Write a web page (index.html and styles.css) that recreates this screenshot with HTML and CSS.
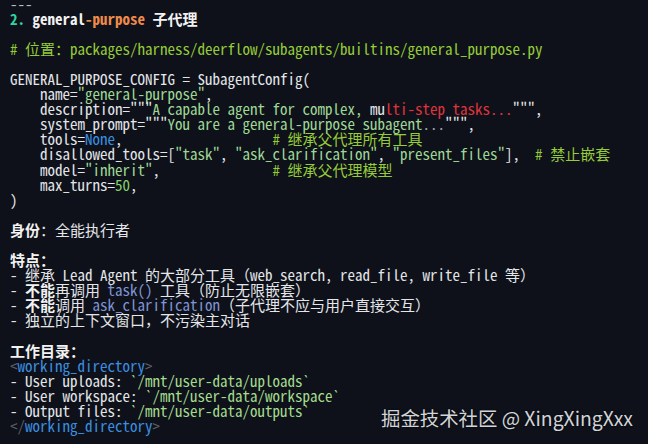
FILE: index.html
```html
<!DOCTYPE html>
<html lang="zh">
<head>
<meta charset="utf-8">
<title>general-purpose 子代理</title>
<link rel="stylesheet" href="styles.css">
</head>
<body>
<main class="doc">
<div class="ln dim">---</div>
<div class="ln"><b class="teal">2.</b> <b>general</b><b class="orange">-purpose</b> <b class="z">子代理</b></div>
<div class="ln"></div>
<div class="ln cm"># <span class="z">位置：</span>packages/harness/deerflow/subagents/builtins/general_purpose.py</div>
<div class="ln"></div>
<div class="ln">GENERAL_PURPOSE_CONFIG = SubagentConfig(</div>
<div class="ln">    name=<span class="str">"general-purpose"</span>,</div>
<div class="ln">    description="""<span class="str">A capable agent for complex, </span>mu<span class="red">lti-step tasks...</span>""",</div>
<div class="ln">    system_prompt="""<span class="str">You are a general-purpose subagent</span><span class="dots">...</span>""",</div>
<div class="ln">    tools=<span class="kw">None</span>,                    <span class="cm"># <span class="z">继承父代理所有工具</span></span></div>
<div class="ln">    disallowed_tools=[<span class="str">"task"</span>, <span class="str">"ask_clarification"</span>, <span class="str">"present_files"</span>],  <span class="cm"># <span class="z">禁止嵌套</span></span></div>
<div class="ln">    model=<span class="str">"inherit"</span>,               <span class="cm"># <span class="z">继承父代理模型</span></span></div>
<div class="ln">    max_turns=<span class="num">50</span>,</div>
<div class="ln">)</div>
<div class="ln"></div>
<div class="ln"><b class="z">身份</b><span class="z">：全能执行者</span></div>
<div class="ln"></div>
<div class="ln"><b class="z">特点：</b></div>
<div class="ln">- <span class="z">继承</span> Lead Agent <span class="z">的大部分工具（</span>web_search, read_file, write_file <span class="z">等）</span></div>
<div class="ln">- <b class="z">不能</b><span class="z">再调用</span> <span class="code">task()</span> <span class="z">工具（防止无限嵌套）</span></div>
<div class="ln">- <b class="z">不能</b><span class="z">调用</span> <span class="code">ask_clarification</span><span class="z">（子代理不应与用户直接交互）</span></div>
<div class="ln">- <span class="z">独立的上下文窗口，不污染主对话</span></div>
<div class="ln"></div>
<div class="ln"><b class="z">工作目录：</b></div>
<div class="ln"><span class="tagp">&lt;</span><span class="tag">working_directory</span><span class="tagp">&gt;</span></div>
<div class="ln">- User uploads: <span class="path">`/mnt/user-data/uploads`</span></div>
<div class="ln">- User workspace: <span class="path">`/mnt/user-data/workspace`</span></div>
<div class="ln">- Output files: <span class="path">`/mnt/user-data/outputs`</span></div>
<div class="ln"><span class="tagp">&lt;/</span><span class="tag">working_directory</span><span class="tagp">&gt;</span></div>
</main>
<div class="wm">掘金技术社区 @ XingXingXxx</div>
</body>
</html>
```
FILE: styles.css
```css
html, body {
  margin: 0;
  padding: 0;
  background: #0e1119;
  width: 648px;
  height: 444px;
  overflow: hidden;
}
body {
  position: relative;
}
.doc {
  display: flex;
  flex-direction: column;
  padding: 0 0 0 10px;
  margin-top: -4.5px;
  font-family: "Noto Sans Mono CJK SC", "DejaVu Sans Mono", monospace;
  font-size: 15px;
  color: #e4e6ea;
}
.ln {
  height: 15.1px;
  line-height: 15.1px;
  white-space: pre;
}
b { font-weight: bold; color: #f2f2f2; }
.dim { color: #b8bcc4; }
.teal { color: #2fd3a0; }
.orange { color: #ee8a4c; }
.cm { color: #96cc3a; }
.str { color: #9fd896; }
.red { color: #e0343d; }
.dots { color: #a0a4ac; }
.kw { color: #3b8fe0; }
.num { color: #86d16c; }
.code { color: #7f95d6; }
.tag { color: #3b8fe0; }
.tagp { color: #5a5f6a; }
.path { color: #a4dc8e; }
.wm {
  position: absolute;
  right: 15px;
  top: 405px;
  font-family: "Noto Sans CJK SC", "Noto Sans", sans-serif;
  font-size: 19.4px;
  line-height: 26px;
  color: #d2d4d8;
  text-shadow: 0 0 2px rgba(0,0,0,0.6);
}
```
